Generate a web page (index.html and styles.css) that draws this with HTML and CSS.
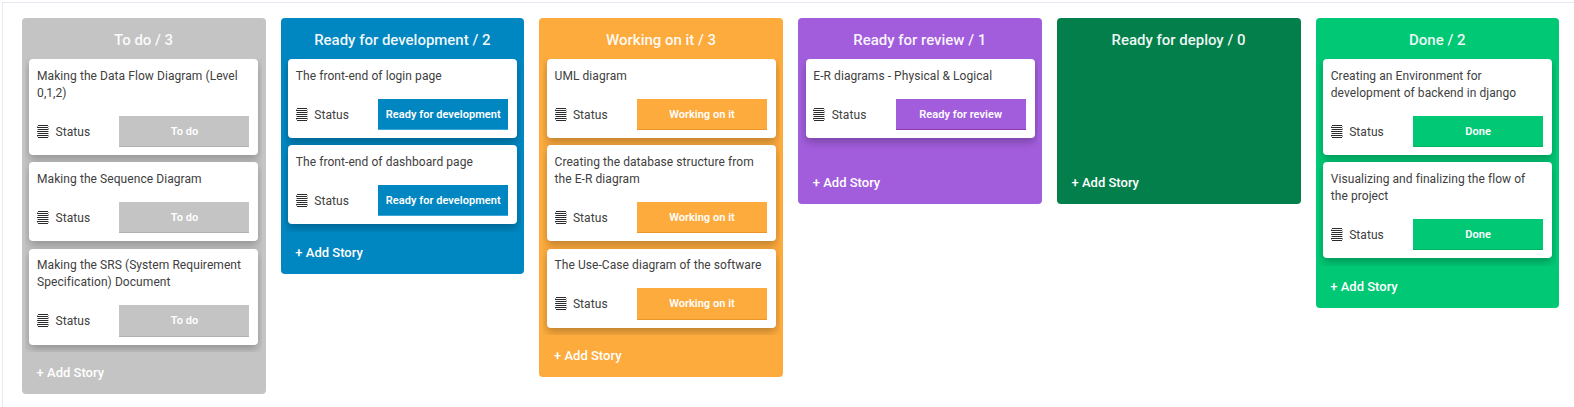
FILE: index.html
```
<!DOCTYPE html>
<html lang="en">
<head>
<meta charset="utf-8">
<title>Board</title>
<link rel="stylesheet" href="styles.css">
</head>
<body>
<svg class="defs" aria-hidden="true">
  <symbol id="status-icon" viewBox="0 0 12 13">
    <path d="M1 0H11V1H1ZM0 2H11V3H0ZM1 4H11V5H1ZM0 6H11V7H0ZM1 8H11V9H1ZM0 10H11V11H0ZM1 12H11V13H1Z" fill="#2b2b2b"/>
    <path d="M0 1H1V2H0ZM11 1H12V2H11ZM0 4H1V5H0ZM11 3H12V5H11ZM0 8H1V9H0ZM11 6H12V7H11ZM11 8H12V9H11ZM11 10H12V12H11ZM0 11H1V12H0Z" fill="#aaa"/>
  </symbol>
</svg>
<main class="board">
  <section class="column todo">
    <h2 class="heading">To do / 3</h2>
    <div class="list">
      <article class="card"><p class="title">Making the Data Flow Diagram (Level 0,1,2)</p><div class="row"><svg class="icon"><use href="#status-icon"/></svg><span class="label">Status</span><span class="status">To do</span></div></article>
      <article class="card"><p class="title">Making the Sequence Diagram</p><div class="row"><svg class="icon"><use href="#status-icon"/></svg><span class="label">Status</span><span class="status">To do</span></div></article>
      <article class="card"><p class="title">Making the SRS (System Requirement Specification) Document</p><div class="row"><svg class="icon"><use href="#status-icon"/></svg><span class="label">Status</span><span class="status">To do</span></div></article>
    </div>
    <div class="add">+ Add Story</div>
  </section>
  <section class="column dev">
    <h2 class="heading">Ready for development / 2</h2>
    <div class="list">
      <article class="card"><p class="title">The front-end of login page</p><div class="row"><svg class="icon"><use href="#status-icon"/></svg><span class="label">Status</span><span class="status">Ready for development</span></div></article>
      <article class="card"><p class="title">The front-end of dashboard page</p><div class="row"><svg class="icon"><use href="#status-icon"/></svg><span class="label">Status</span><span class="status">Ready for development</span></div></article>
    </div>
    <div class="add">+ Add Story</div>
  </section>
  <section class="column working">
    <h2 class="heading">Working on it / 3</h2>
    <div class="list">
      <article class="card"><p class="title">UML diagram</p><div class="row"><svg class="icon"><use href="#status-icon"/></svg><span class="label">Status</span><span class="status">Working on it</span></div></article>
      <article class="card"><p class="title">Creating the database structure from the E-R diagram</p><div class="row"><svg class="icon"><use href="#status-icon"/></svg><span class="label">Status</span><span class="status">Working on it</span></div></article>
      <article class="card"><p class="title">The Use-Case diagram of the software</p><div class="row"><svg class="icon"><use href="#status-icon"/></svg><span class="label">Status</span><span class="status">Working on it</span></div></article>
    </div>
    <div class="add">+ Add Story</div>
  </section>
  <section class="column review">
    <h2 class="heading">Ready for review / 1</h2>
    <div class="list">
      <article class="card"><p class="title">E-R diagrams - Physical &amp; Logical</p><div class="row"><svg class="icon"><use href="#status-icon"/></svg><span class="label">Status</span><span class="status">Ready for review</span></div></article>
    </div>
    <div class="add">+ Add Story</div>
  </section>
  <section class="column deploy">
    <h2 class="heading">Ready for deploy / 0</h2>
    <div class="list"></div>
    <div class="add">+ Add Story</div>
  </section>
  <section class="column done">
    <h2 class="heading">Done / 2</h2>
    <div class="list">
      <article class="card"><p class="title">Creating an Environment for development of backend in django</p><div class="row"><svg class="icon"><use href="#status-icon"/></svg><span class="label">Status</span><span class="status">Done</span></div></article>
      <article class="card"><p class="title">Visualizing and finalizing the flow of the project</p><div class="row"><svg class="icon"><use href="#status-icon"/></svg><span class="label">Status</span><span class="status">Done</span></div></article>
    </div>
    <div class="add">+ Add Story</div>
  </section>
</main>
</body>
</html>
```
FILE: styles.css
```
* { box-sizing: border-box; }
body {
  margin: 0;
  padding: 2px 0 0 2px;
  height: 407px;
  overflow: hidden;
  background: #fff;
  font-family: Roboto, sans-serif;
}
.defs { display: none; }
.board {
  display: flex;
  align-items: flex-start;
  gap: 15.05px;
  height: 405px;
  padding: 15px 0 0 18.9px;
  border-top: 1px solid #e6e9f3;
  border-left: 1px solid #e6e9f3;
}
.column {
  flex: none;
  width: 243.7px;
  border-radius: 4px;
  background: var(--color);
}
.todo { --color: #c4c4c4; --edge: #b0b0b0; }
.dev { --color: #0086c0; --edge: #3da6d8; }
.working { --color: #fdab3d; --edge: #e99729; }
.review { --color: #a25ddc; --edge: #9238af; }
.deploy { --color: #037f4c; --edge: #006b38; }
.done { --color: #00c875; --edge: #00b461; }
.heading {
  margin: 0;
  height: 41px;
  padding: 2px .3px 0 0;
  line-height: 41px;
  font-size: 15px;
  font-weight: 500;
  letter-spacing: -.02px;
  text-align: center;
  color: rgba(255, 255, 255, .95);
}
.list {
  display: flex;
  flex-direction: column;
  gap: 7.3px;
  min-height: 103px;
  margin: 0 3.3px;
  padding: 0 4px 7.3px 4.2px;
  overflow: hidden;
}
.card {
  flex: none;
  width: 229px;
  padding: 8.7px 8.9px 8px 7.7px;
  border-radius: 4px;
  background: #fff;
  box-shadow: 0 4px 8px rgba(0, 0, 0, .25);
}
.title {
  margin: 0;
  padding: 0 3px 13.9px 0;
  font-size: 12px;
  line-height: 17px;
  letter-spacing: .07px;
  color: #404040;
}
.row {
  display: flex;
  align-items: center;
  height: 31.4px;
}
.icon {
  width: 12px;
  height: 13px;
  margin-right: 6.4px;
  shape-rendering: crispEdges;
}
.label {
  flex: 1;
  padding-top: 1.3px;
  font-size: 12px;
  letter-spacing: .07px;
  color: #404040;
}
.status {
  width: 130px;
  height: 31.4px;
  border-bottom: 1px solid var(--edge);
  background: var(--color);
  font-size: 11px;
  font-weight: 600;
  letter-spacing: .04px;
  line-height: 31px;
  text-align: center;
  color: #fff;
}
.add {
  height: 42px;
  padding-left: 14.7px;
  line-height: 42px;
  font-size: 13px;
  font-weight: 500;
  color: #fff;
}
```
